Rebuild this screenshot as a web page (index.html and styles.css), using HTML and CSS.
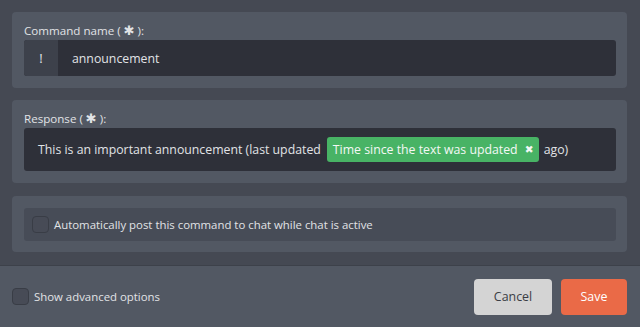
FILE: index.html
```html
<!DOCTYPE html>
<html lang="en">
<head>
    <meta charset="UTF-8">
    <meta name="viewport" content="width=device-width, initial-scale=1.0">
    <title>Edit Command</title>
    <link rel="stylesheet" href="styles.css">
</head>
<body>
<div class="modal">
    <div class="modal-body">
        <div class="card">
            <label class="field-label">Command name ( <span class="req">✱</span> ):</label>
            <div class="input-group">
                <span class="prefix">!</span>
                <div class="input-text">announcement</div>
            </div>
        </div>
        <div class="card">
            <label class="field-label">Response ( <span class="req">✱</span> ):</label>
            <div class="response-box">
                <span>This is an important announcement (last updated</span>
                <span class="chip">Time since the text was updated <span class="chip-x">✖</span></span>
                <span>ago)</span>
            </div>
        </div>
        <div class="card card-check">
            <div class="check-row">
                <span class="checkbox"></span>
                <span>Automatically post this command to chat while chat is active</span>
            </div>
        </div>
    </div>
    <footer class="modal-footer">
        <div class="advanced">
            <span class="checkbox"></span>
            <span>Show advanced options</span>
        </div>
        <div class="buttons">
            <button class="btn btn-cancel">Cancel</button>
            <button class="btn btn-save">Save</button>
        </div>
    </footer>
</div>
</body>
</html>
```

FILE: styles.css
```css
body {
    margin: 0;
    padding: 0;
    font-family: "Open Sans", "Noto Sans", sans-serif;
    background-color: #454953;
    color: #e1e3e6;
}
.modal {
    width: 640px;
    height: 327px;
    display: flex;
    flex-direction: column;
}
.modal-body {
    padding: 12px 13px 13px 12px;
    display: flex;
    flex-direction: column;
    gap: 12px;
    border-bottom: 1px solid #3d414a;
}
.card {
    background-color: #525863;
    border-radius: 4px;
    padding: 10px 11px 12px 12px;
}
.card-check {
    padding: 12px 11px 11px 12px;
    margin-top: 1px;
}
.field-label {
    display: block;
    font-size: 11.6px;
    line-height: 18px;
}
.req {
    font-family: "DejaVu Sans", sans-serif;
    font-size: 13px;
    font-weight: bold;
}
.input-group {
    display: flex;
    height: 36px;
    border-radius: 3px;
    overflow: hidden;
    background-color: #2e3039;
}
.prefix {
    width: 34px;
    display: flex;
    align-items: center;
    justify-content: center;
    background-color: #3d414b;
    font-size: 13px;
}
.input-text {
    display: flex;
    align-items: center;
    padding-left: 14px;
    font-size: 12.3px;
}
.response-box {
    height: 43px;
    display: flex;
    align-items: center;
    gap: 4px;
    padding-left: 14px;
    background-color: #2e3039;
    border-radius: 3px;
    font-size: 12.3px;
    white-space: nowrap;
}
.chip {
    background-color: #48b365;
    color: #f4f8f5;
    border-radius: 3px;
    height: 25px;
    line-height: 25px;
    padding: 0 5px 0 6px;
    margin: 0 1px 0 2px;
}
.chip-x {
    font-family: "DejaVu Sans", sans-serif;
    font-size: 10.5px;
    margin-left: 4px;
    vertical-align: 1px;
}
.check-row {
    display: flex;
    align-items: center;
    gap: 5px;
    height: 33px;
    padding-left: 8px;
    background-color: #474c57;
    border-radius: 3px;
    font-size: 11.4px;
}
.checkbox {
    width: 15px;
    height: 15px;
    border: 1px solid #393d46;
    border-radius: 4px;
    background-color: #474b56;
    flex-shrink: 0;
}
.modal-footer {
    flex: 1;
    background-color: #525863;
    display: flex;
    align-items: center;
    justify-content: space-between;
    padding: 0 13px 0 12px;
}
.advanced {
    display: flex;
    align-items: center;
    gap: 5px;
    font-size: 11.4px;
}
.buttons {
    display: flex;
    gap: 9px;
}
.btn {
    height: 36px;
    border: none;
    border-radius: 4px;
    font-family: "Open Sans", "Noto Sans", sans-serif;
    font-size: 12.4px;
    cursor: pointer;
}
.btn-cancel {
    width: 78px;
    background-color: #d4d4d4;
    color: #3a3d44;
}
.btn-save {
    width: 66px;
    background-color: #ea6a47;
    color: #ffffff;
}
```
